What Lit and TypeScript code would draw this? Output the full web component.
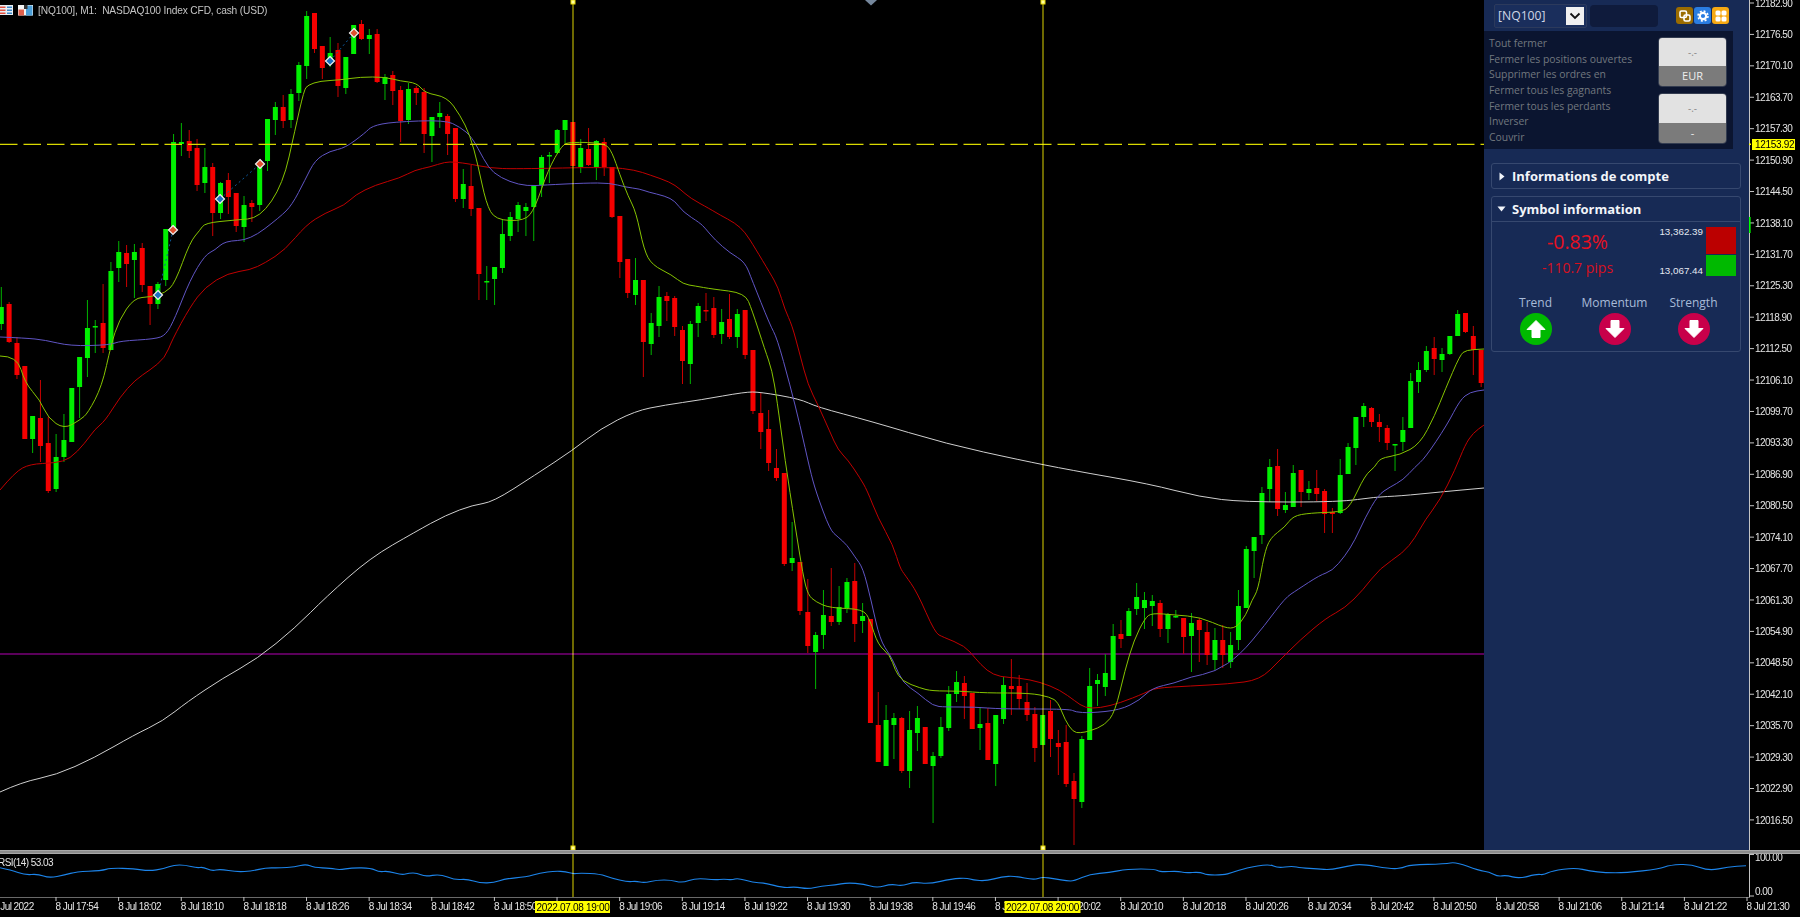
import { LitElement, html, svg, css } from 'lit';
import { customElement } from 'lit/decorators.js';

// [green?, high, body top, body bottom, low] in chart pixels, one bar per minute
const BARS: number[][] = [
  [1,287,307,324,330],[0,302,304,342,343],[0,337,343,375,379],[0,366,366,439,439],[1,416,416,439,453],
  [0,380,418,446,462],[0,417,443,491,493],[1,434,457,489,492],[1,414,440,457,462],[1,388,388,442,442],
  [1,357,357,387,418],[1,300,328,358,377],[1,320,326,327,353],[0,284,323,348,353],[1,262,271,350,350],
  [1,241,252,268,282],[0,245,253,264,287],[1,244,252,260,298],[0,243,248,285,292],[0,286,286,304,325],
  [1,282,284,304,309],[1,229,229,280,286],[1,134,142,228,228],[1,123,142,144,156],[0,130,141,151,158],
  [0,139,148,185,191],[1,148,167,183,193],[0,163,167,213,236],[1,182,183,213,219],[0,173,180,197,214],
  [0,193,193,226,232],[1,196,205,227,242],[0,200,203,207,222],[1,163,167,205,211],[1,119,119,161,171],
  [1,102,107,120,135],[0,95,107,121,128],[1,89,94,120,128],[1,62,65,93,101],[1,11,16,66,79],
  [0,13,13,49,53],[0,46,46,68,79],[1,37,53,63,67],[0,43,50,86,97],[1,57,57,88,94],
  [1,25,25,54,54],[0,20,24,39,40],[1,29,35,39,54],[0,29,34,82,83],[1,74,77,84,100],
  [0,71,75,91,105],[0,86,90,121,142],[1,83,89,120,124],[0,86,88,93,105],[0,88,92,134,153],
  [1,117,117,136,162],[1,102,113,117,128],[0,114,116,134,155],[0,128,128,199,202],[1,169,184,199,208],
  [0,165,186,209,216],[0,208,208,274,300],[1,266,281,282,300],[1,267,267,279,305],[1,220,234,268,273],
  [1,212,217,236,241],[1,202,205,219,232],[1,203,207,211,236],[1,186,186,207,241],[1,155,157,185,197],
  [1,152,155,156,183],[1,129,130,153,154],[1,120,120,130,143],[0,122,122,166,166],[1,139,148,167,173],
  [0,128,149,165,166],[1,140,141,167,180],[0,138,142,167,176],[0,167,167,217,218],[0,216,216,262,278],
  [0,259,259,293,298],[1,258,280,295,305],[0,280,280,342,377],[1,313,323,344,355],[1,286,297,326,337],
  [0,292,296,301,321],[0,296,298,327,336],[0,326,330,361,384],[1,321,324,364,384],[1,303,306,323,337],
  [0,293,310,311,321],[0,297,308,335,338],[1,309,322,334,344],[0,294,319,337,339],[1,309,314,337,348],
  [0,310,310,355,359],[0,350,350,411,414],[0,393,413,432,449],[0,410,429,463,471],[0,449,468,478,481],
  [0,473,473,564,566],[1,522,558,563,571],[0,562,562,611,615],[0,579,612,646,653],[1,632,635,652,689],
  [1,590,615,635,649],[0,568,616,622,626],[1,586,607,622,625],[1,578,582,608,613],[0,563,581,624,642],
  [1,603,616,621,633],[0,619,619,723,723],[0,692,725,762,762],[1,705,720,766,766],[1,713,718,725,759],
  [0,717,718,771,773],[1,711,730,771,788],[1,706,718,733,751],[0,727,727,764,764],[1,752,756,766,823],
  [1,717,727,756,758],[1,686,694,728,731],[1,671,682,694,702],[0,676,683,696,719],[0,693,693,729,729],
  [1,707,724,728,750],[0,708,723,760,760],[1,715,715,764,786],[1,677,685,719,724],[0,659,686,689,715],
  [0,675,686,699,709],[0,683,702,715,721],[0,707,714,748,762],[1,715,715,745,745],[0,700,711,739,757],
  [0,730,743,747,775],[0,725,742,784,787],[0,773,781,799,845],[1,736,739,802,808],[1,668,686,740,740],
  [1,674,680,684,706],[1,654,673,687,696],[1,624,636,680,680],[0,620,634,639,648],[1,608,611,636,636],
  [1,583,597,609,615],[1,592,600,608,629],[1,595,601,606,626],[0,600,603,629,637],[1,613,614,629,643],
  [1,610,616,617,618],[0,618,618,637,654],[1,613,623,636,672],[0,618,620,630,662],[0,622,632,655,665],
  [1,628,640,660,670],[0,625,640,655,668],[1,632,645,662,668],[1,590,606,640,650],[1,546,549,608,608],
  [1,537,537,551,578],[1,487,493,535,544],[1,459,467,489,502],[0,449,466,509,516],[1,492,505,510,513],
  [1,465,473,507,507],[0,470,470,492,507],[1,481,489,493,500],[0,470,488,494,501],[0,489,491,514,533],
  [0,508,512,514,533],[1,459,475,513,514],[1,443,447,474,474],[1,417,417,448,465],[1,403,406,417,427],
  [0,407,408,422,427],[0,414,422,427,442],[0,425,428,443,450],[1,444,444,445,471],[1,417,430,442,451],
  [1,373,381,428,428],[1,362,370,382,393],[1,346,351,370,372],[0,337,348,359,375],[1,348,354,360,372],
  [1,336,336,354,355],[1,310,314,336,336],[0,313,313,332,333],[0,326,336,350,375],[0,350,350,383,387],
];

const FAST = '0,356 17,356 25,383 40,400 48,418 64,429 80,420 88,413 102,386 111,345 119,320 134,298 150,297 165,293 175,283 190,242 200,230 205,223 235,220 260,218 283,184 295,130 304,90 308,85 320,81 340,80 360,77 385,77 400,81 417,83 425,93 447,97 460,115 470,135 478,165 486,203 495,220 525,221 535,208 548,170 562,145 570,142 605,143 612,152 620,175 628,196 636,212 644,250 652,265 672,275 683,284 695,286 712,289 745,293 752,310 765,350 772,370 777,400 785,460 795,525 803,575 808,595 816,602 830,608 863,609 870,620 878,645 890,655 895,670 902,681 920,688 932,691 960,691 985,693 1030,693 1050,697 1058,702 1065,720 1073,732 1080,733 1090,731 1105,725 1115,712 1125,670 1134,640 1145,618 1152,613 1175,615 1200,617 1225,628 1236,628 1246,615 1252,600 1258,590 1264,555 1270,538 1285,527 1293,516 1310,513 1340,512 1350,507 1365,475 1375,467 1380,458 1400,455 1420,444 1435,415 1445,390 1460,355 1466,350 1484,349';
const MID = '0,337 25,338 45,340 70,346 110,345 120,341 155,339 166,335 175,318 190,280 205,255 215,250 225,241 250,240 280,217 292,205 305,180 315,160 330,151 345,148 365,133 372,126 392,122 445,120 460,127 472,137 484,160 493,173 510,182 527,186 545,185 585,183 610,183 625,187 640,189 648,192 665,196 675,201 683,212 700,223 705,228 715,240 730,253 745,262 752,280 770,325 777,338 790,385 800,425 810,470 816,492 830,530 838,537 847,545 855,557 863,568 871,600 880,640 890,655 895,665 903,683 918,693 933,706 945,707 975,707 1000,709 1070,709 1075,712 1090,713 1120,710 1140,700 1152,688 1175,683 1190,677 1215,672 1240,655 1265,625 1285,598 1297,590 1320,575 1332,571 1345,556 1355,540 1365,518 1378,495 1390,487 1403,480 1415,467 1425,458 1447,425 1460,400 1470,392 1484,390';
const SLOW = '0,490 15,472 30,464 55,463 70,459 85,443 95,429 105,421 120,397 135,380 150,370 165,358 172,340 190,307 205,287 228,273 250,270 265,263 285,250 306,225 325,213 345,205 355,195 375,185 400,178 415,170 430,167 445,162 455,162 470,164 490,168 515,169 610,167 635,170 650,175 670,182 680,189 690,198 710,209 720,215 735,223 745,232 755,248 770,273 778,287 785,310 792,325 800,355 808,385 818,405 830,432 838,450 848,460 860,478 867,490 878,518 893,545 900,568 905,575 917,592 935,633 943,637 965,646 975,658 987,671 1000,677 1020,678 1040,682 1060,690 1075,701 1085,708 1100,708 1120,703 1145,693 1155,688 1190,686 1228,684 1260,680 1280,660 1300,640 1326,618 1345,608 1363,590 1380,568 1403,553 1415,538 1425,520 1440,500 1455,470 1465,445 1473,433 1484,425';
const LONG = '0,792 22,782 56,775 94,758 134,735 163,721 187,702 223,678 257,659 295,628 326,597 370,558 415,532 446,515 473,505 493,502 535,475 573,450 600,429 635,411 665,405 700,400 745,392 760,392 800,399 817,407 870,421 947,444 1020,460 1070,470 1150,484 1200,497 1243,502 1340,502 1375,497 1400,496 1440,492 1484,488';
const RSI = '0,13.7 11,16 25,21 38,20 49,24 65,21 76,17.7 101,16.7 111,14 134,14.7 149,17 164,14.7 174,11 185,11 197,14 203,13 212,17 220,15 237,18 252,17 266,13.7 279,14 295,13 306,10 314,13.7 331,14 339,16 352,13.7 371,14 379,18 388,17 402,21 409,19 417,19 425,22.7 440,20 455,26 467,25 480,29 494,28.7 505,24.7 526,23 540,19 555,17 566,17.7 573,20 580,19 600,20 611,24 628,28 636,27 644,29 657,26 671,26 682,29 696,24 715,26 724,25 732,26 738,24 753,28.7 764,28.7 784,34 795,32.7 808,35 822,32 835,31 847,28.7 864,30 877,34 891,30 902,32 914,28 929,30 952,24.7 967,24 973,26 986,27 1002,22.7 1015,22 1034,26 1042,23 1055,24.7 1067,27 1074,27 1090,20 1109,18.7 1127,15 1155,15 1160,18 1178,17 1185,19 1200,18 1207,21 1223,21 1232,18.7 1246,14 1269,10 1278,14 1292,12 1301,14 1318,14.7 1330,16 1349,11.7 1362,10 1391,15 1403,14 1410,10.7 1445,10 1456,8 1479,16.7 1489,17.7 1498,22.7 1506,21 1519,24.7 1537,20 1544,21 1552,16.7 1575,13.7 1590,17 1605,18.7 1626,18.7 1659,15 1670,11 1691,10 1709,17 1728,12.7 1746,11.7';

const PRICES = ['12182.90','12176.50','12170.10','12163.70','12157.30','12150.90','12144.50','12138.10','12131.70','12125.30','12118.90','12112.50','12106.10','12099.70','12093.30','12086.90','12080.50','12074.10','12067.70','12061.30','12054.90','12048.50','12042.10','12035.70','12029.30','12022.90','12016.50'];

const CLOSE_ACTIONS = ['Tout fermer', 'Fermer les positions ouvertes', 'Supprimer les ordres en', 'Fermer tous les gagnants', 'Fermer tous les perdants', 'Inverser', 'Couvrir'];

const TREND_ITEMS = [
  { label: 'Trend', up: true },
  { label: 'Momentum', up: false },
  { label: 'Strength', up: false },
];

const timeLabel = (k: number) => {
  const m = 17 * 60 + 54 + k * 8;
  return `8 Jul ${Math.floor(m / 60)}:${String(m % 60).padStart(2, '0')}`;
};

// rounds the sampled line through the midpoints of its segments
const smooth = (points: string) => {
  const p = points.split(' ').map((s) => s.split(',').map(Number));
  let d = `M${p[0][0]} ${p[0][1]}`;
  for (let i = 1; i < p.length - 1; i++) {
    d += ` Q${p[i][0]} ${p[i][1]} ${(p[i][0] + p[i + 1][0]) / 2} ${(p[i][1] + p[i + 1][1]) / 2}`;
  }
  const last = p[p.length - 1];
  return `${d} L${last[0]} ${last[1]}`;
};

const LINE_A = 573;
const LINE_B = 1043;

@customElement('app-root')
export class AppRoot extends LitElement {
  static styles = css`
    :host {
      display: block;
      width: 1800px;
      height: 917px;
      background: #000;
      overflow: hidden;
      font-family: "Open Sans", sans-serif;
    }
    svg { display: block; }
    .top { display: flex; height: 850px; }
    .sep { height: 4px; background: #8c8c8c; border-top: 1px solid #a8a8a8; border-bottom: 1px solid #a8a8a8; box-sizing: border-box; }

    .axis-text { font: 10px "Liberation Sans", sans-serif; letter-spacing: -0.55px; fill: #e4e4e4; }
    .title { font: 10.2px "Liberation Sans", sans-serif; letter-spacing: -0.15px; fill: #c4c4c4; white-space: pre; }
    .axis-line { stroke: #c4c4c4; stroke-width: 1; fill: none; }
    .time-line { stroke: #8d8d8d; stroke-width: 1.4; }
    .tag { fill: #ffff00; }
    .tag-text { font: 10px "Liberation Sans", sans-serif; letter-spacing: -0.3px; fill: #000; }
    .vline { stroke: #8a8400; stroke-width: 1.6; mix-blend-mode: screen; }
    .wick-g { stroke: #00b400; stroke-width: 1; }
    .wick-r { stroke: #c80000; stroke-width: 1; }
    .body-g { fill: #00f000; }
    .body-r { fill: #f50000; }
    .ma { fill: none; stroke-width: 1; stroke-linejoin: round; }
    .ma-fast { stroke: #86c400; }
    .ma-mid { stroke: #6055c4; }
    .ma-slow { stroke: #c00000; }
    .ma-long { stroke: #cfcfcf; }
    .rsi { fill: none; stroke: #1c84ea; stroke-width: 1.1; }
    .dash { stroke: #d9d900; stroke-width: 1.2; stroke-dasharray: 17.5 6; }
    .magenta { stroke: #b400b4; stroke-width: 1.2; }
    .trade { stroke: #0d5a9c; stroke-width: 1; stroke-dasharray: 2 3; }
    .handle { fill: #ffffa0; stroke: #e8d800; stroke-width: 1; }
    .mark { stroke: #f0f0f0; stroke-width: 1.2; }
    .mark-buy { fill: #1b6fc0; }
    .mark-sell { fill: #e0502f; }

    .panel {
      width: 265px;
      height: 849.5px;
      background: #172a55;
      color: #fff;
    }
    .toolbar { display: flex; align-items: center; height: 31px; padding-left: 10px; box-sizing: border-box; }
    .select {
      display: flex;
      align-items: center;
      justify-content: space-between;
      box-sizing: border-box;
      width: 93px;
      height: 24px;
      padding: 0 2px 0 3px;
      border: 1px solid #2c3a5c;
      border-radius: 2px;
      background: #1a2e5c;
      font-size: 12.2px;
      color: #cfd6e6;
    }
    .caret { display: flex; align-items: center; justify-content: center; width: 18px; height: 18px; background: #f0f0f0; }
    .search { width: 68px; height: 22px; margin-left: 3px; border-radius: 4px; background: #0f1b3c; }
    .tools { display: flex; gap: 1px; margin-left: 18px; }
    .tool { width: 17px; height: 17px; border-radius: 3px; display: flex; align-items: center; justify-content: center; }
    .tool-gold { background: #9b6c00; }
    .tool-blue { background: #2a7de1; }
    .tool-orange { background: #f6a913; }

    .close-box {
      display: flex;
      justify-content: space-between;
      box-sizing: border-box;
      width: 249px;
      height: 118px;
      padding: 5px 6px 0 5px;
      background: #0b1530;
    }
    .close-list { display: flex; flex-direction: column; font-size: 10.4px; line-height: 15.67px; color: #72787f; white-space: nowrap; }
    .money-col { display: flex; flex-direction: column; gap: 6px; padding-top: 0.5px; }
    .money { width: 69px; height: 50px; border-radius: 4px; overflow: hidden; display: flex; flex-direction: column; border: 1px solid #333c50; box-sizing: border-box; font-size: 11px; text-align: center; }
    .money + .money { height: 51px; }
    .money-top { flex: 1; background: #e2e2e2; color: #8a8a8a; font-size: 10px; display: flex; align-items: center; justify-content: center; }
    .money-bot { height: 20px; background: #7b7b7b; color: #eee; display: flex; align-items: center; justify-content: center; }

    .acc { margin-left: 7px; width: 250px; box-sizing: border-box; border: 1px solid #36486f; border-radius: 3px; }
    .acc-closed { margin-top: 14px; height: 26px; }
    .acc-open { margin-top: 7px; height: 156px; }
    .acc-head { display: flex; align-items: center; height: 24px; font-size: 13px; font-weight: 700; color: #f2f5fa; white-space: nowrap; }
    .acc-open .acc-head { border-bottom: 1px solid #36486f; }
    .tri { width: 20px; display: flex; justify-content: center; }
    .acc-open .tri { padding-right: 1px; box-sizing: border-box; }

    .quote { display: flex; height: 62px; padding-top: 5px; box-sizing: border-box; }
    .change { width: 160px; display: flex; flex-direction: column; align-items: center; color: #e8101f; padding-left: 11px; box-sizing: border-box; }
    .pct { font-size: 19.5px; line-height: 27px; margin-top: 1px; }
    .pips { font-size: 14px; line-height: 20px; margin-top: 3px; color: #d81020; }
    .range { display: flex; flex: 1; }
    .range-vals { width: 54px; display: flex; flex-direction: column; justify-content: space-between; align-items: flex-end; font: 9.8px "Liberation Sans", sans-serif; color: #e4e8f0; height: 50px; margin: -1px 3px 0 -3px; }
    .range-bars { width: 30px; display: flex; flex-direction: column; gap: 1px; }
    .bar-hi { height: 27px; background: #bb0000; }
    .bar-lo { height: 21px; background: #00b900; }

    .trends { display: flex; padding: 10px 0 0 4px; }
    .trend { width: 79px; display: flex; flex-direction: column; align-items: center; font-size: 12px; line-height: 17px; color: #a8bbd8; white-space: nowrap; gap: 2px; }
    .dot { width: 32px; height: 32px; border-radius: 50%; display: flex; align-items: center; justify-content: center; }
    .dot-up { background: #00b900; }
    .dot-down { background: #c8004a; }
  `;

  private bars() {
    return BARS.map(([g, hi, top, bot, lo], i) => {
      const x = 1.3 + 7.83 * i;
      return svg`
        <line class=${g ? 'wick-g' : 'wick-r'} x1=${x} x2=${x} y1=${hi} y2=${lo}></line>
        <rect class=${g ? 'body-g' : 'body-r'} x=${x - 2.5} y=${top} width="5" height=${Math.max(bot - top, 1.5)}></rect>`;
    });
  }

  private marker(x: number, y: number, buy: boolean) {
    const p = `${x},${y - 4.5} ${x + 4.5},${y} ${x},${y + 4.5} ${x - 4.5},${y}`;
    return svg`<polygon class="mark ${buy ? 'mark-buy' : 'mark-sell'}" points=${p}></polygon>`;
  }

  private chart() {
    return html`<svg width="1484" height="850" viewBox="0 0 1484 850">
      <line class="magenta" x1="0" x2="1484" y1="654" y2="654"></line>
      ${this.bars()}
      <path class="ma ma-long" d=${smooth(LONG)}></path>
      <path class="ma ma-slow" d=${smooth(SLOW)}></path>
      <path class="ma ma-mid" d=${smooth(MID)}></path>
      <path class="ma ma-fast" d=${smooth(FAST)}></path>
      <line class="dash" x1="0" x2="1484" y1="144.3" y2="144.3"></line>
      <line class="trade" x1="158" y1="295" x2="173" y2="230"></line>
      <line class="trade" x1="220" y1="199" x2="260" y2="164"></line>
      <line class="trade" x1="330" y1="61" x2="354" y2="33"></line>
      ${this.marker(158, 295, true)}${this.marker(173, 230, false)}
      ${this.marker(220, 199, true)}${this.marker(260, 164, false)}
      ${this.marker(330, 61, true)}${this.marker(354, 33, false)}
      <polygon points="865,0 877,0 871,5.5" fill="#75879c"></polygon>
      <line class="vline" x1=${LINE_A} x2=${LINE_A} y1="0" y2="850"></line>
      <line class="vline" x1=${LINE_B} x2=${LINE_B} y1="0" y2="850"></line>
      <rect class="handle" x=${LINE_A - 2} y="0" width="4" height="4"></rect>
      <rect class="handle" x=${LINE_B - 2} y="0" width="4" height="4"></rect>
      <rect class="handle" x=${LINE_A - 2} y="846" width="4" height="4"></rect>
      <rect class="handle" x=${LINE_B - 2} y="846" width="4" height="4"></rect>
      <g>
        <rect x="0" y="5" width="13" height="10" fill="#e8eef4"></rect>
        <rect x="0" y="6.5" width="5.5" height="1.5" fill="#e05040"></rect>
        <rect x="0" y="9.5" width="5.5" height="1.5" fill="#e05040"></rect>
        <rect x="0" y="12.5" width="5.5" height="1.5" fill="#e05040"></rect>
        <rect x="7" y="6.5" width="5" height="1.5" fill="#3a88c8"></rect>
        <rect x="7" y="9.5" width="5" height="1.5" fill="#3a88c8"></rect>
        <rect x="7" y="12.5" width="5" height="1.5" fill="#3a88c8"></rect>
        <rect x="18" y="5" width="15" height="10.5" fill="#f4f4f4"></rect>
        <rect x="18.5" y="9.5" width="5.5" height="6" fill="#e0604c"></rect>
        <rect x="26" y="5.5" width="6.5" height="10" fill="#4a9ed8"></rect>
        <rect x="24" y="5" width="3.5" height="4" fill="#333"></rect>
      </g>
      <text class="title" x="38" y="13.7">[NQ100], M1:  NASDAQ100 Index CFD, cash (USD)</text>
    </svg>`;
  }

  private priceAxis() {
    return html`<svg width="51" height="850" viewBox="1749 0 51 850">
      <line class="axis-line" x1="1749.5" x2="1749.5" y1="0" y2="850"></line>
      ${PRICES.map((p, i) => {
        const y = 3 + i * 31.42;
        return svg`
          <line class="axis-line" x1="1749" x2="1754" y1=${y} y2=${y}></line>
          <text class="axis-text" x="1755" y=${y + 3.6}>${p}</text>`;
      })}
      <rect x="1749" y="217" width="1.6" height="16" fill="#00ff00"></rect>
      <rect class="tag" x="1749" y="143.5" width="2" height="1.5"></rect>
      <rect class="tag" x="1752" y="139" width="43" height="11"></rect>
      <text class="tag-text" x="1755" y="148.2">12153.92</text>
    </svg>`;
  }

  private rsiRow() {
    return html`<svg width="1800" height="43" viewBox="0 0 1800 43">
      <path class="rsi" fill="none" d=${smooth(RSI)}></path>
      <line class="vline" x1=${LINE_A} x2=${LINE_A} y1="0" y2="43"></line>
      <line class="vline" x1=${LINE_B} x2=${LINE_B} y1="0" y2="43"></line>
      <line class="axis-line" x1="1749.5" x2="1749.5" y1="0" y2="43"></line>
      <line class="axis-line" x1="1749" x2="1754" y1="0.5" y2="0.5"></line>
      <line class="axis-line" x1="1749" x2="1754" y1="42" y2="42"></line>
      <text class="axis-text" x="-2" y="11.5">RSI(14) 53.03</text>
      <text class="axis-text" x="1755" y="6.5">100.00</text>
      <text class="axis-text" x="1755" y="40.5">0.00</text>
    </svg>`;
  }

  private timeAxis() {
    const ticks = Array.from({ length: 28 }, (_, k) => 56 + k * 62.63);
    return html`<svg width="1800" height="20" viewBox="0 0 1800 20">
      <line class="time-line" x1="0" x2="1750" y1="0" y2="0"></line>
      <text class="axis-text" x="-7" y="13">8 Jul 2022</text>
      ${ticks.map((x, k) => svg`
        <line class="axis-line" x1=${x} x2=${x} y1="0" y2="4"></line>
        <text class="axis-text" x=${x - 0.5} y="13">${timeLabel(k)}</text>`)}
      <rect class="tag" x="535" y="4" width="75" height="12"></rect>
      <text class="tag-text" x="536.5" y="13.5">2022.07.08 19:00</text>
      <rect class="tag" x="1004.5" y="4" width="76" height="12"></rect>
      <text class="tag-text" x="1006" y="13.5">2022.07.08 20:00</text>
    </svg>`;
  }

  private arrow(up: boolean) {
    const d = 'M0 -8.5 L9 0.5 L4 0.5 L4 8.5 L-4 8.5 L-4 0.5 L-9 0.5 Z';
    return html`<svg width="22" height="22" viewBox="-11 -11 22 22">
      <path d=${d} fill="#fff" stroke="#fff" stroke-width="1" stroke-linejoin="round" transform=${up ? '' : 'rotate(180)'}></path>
    </svg>`;
  }

  private panel() {
    return html`<aside class="panel">
      <div class="toolbar">
        <div class="select">
          <span>[NQ100]</span>
          <span class="caret"><svg width="12" height="8" viewBox="0 0 12 8"><path d="M1.5 1.5 L6 6 L10.5 1.5" fill="none" stroke="#111" stroke-width="1.8"></path></svg></span>
        </div>
        <div class="search"></div>
        <div class="tools">
          <span class="tool tool-gold"><svg width="12" height="12" viewBox="0 0 12 12"><rect x="1" y="1" width="6.5" height="6.5" rx="1.5" fill="none" stroke="#fff" stroke-width="1.6"></rect><rect x="5" y="5" width="6" height="6" rx="1.5" fill="none" stroke="#fff" stroke-width="1.6"></rect></svg></span>
          <span class="tool tool-blue"><svg width="12" height="12" viewBox="0 0 12 12"><circle cx="6" cy="6" r="3.2" fill="none" stroke="#fff" stroke-width="2.2"></circle><circle cx="6" cy="6" r="5" fill="none" stroke="#fff" stroke-width="1.5" stroke-dasharray="2 1.93"></circle></svg></span>
          <span class="tool tool-orange"><svg width="12" height="12" viewBox="0 0 12 12"><rect x="0.5" y="0.5" width="5" height="5" rx="1.5" fill="#fff"></rect><rect x="6.5" y="0.5" width="5" height="5" rx="1.5" fill="#fff"></rect><rect x="0.5" y="6.5" width="5" height="5" rx="1.5" fill="#fff"></rect><rect x="6.5" y="6.5" width="5" height="5" rx="1.5" fill="#fff"></rect></svg></span>
        </div>
      </div>
      <div class="close-box">
        <div class="close-list">${CLOSE_ACTIONS.map((a) => html`<span>${a}</span>`)}</div>
        <div class="money-col">
          <div class="money"><div class="money-top">-.-</div><div class="money-bot">EUR</div></div>
          <div class="money"><div class="money-top">-.-</div><div class="money-bot">-</div></div>
        </div>
      </div>
      <section class="acc acc-closed">
        <div class="acc-head">
          <span class="tri"><svg width="6" height="9" viewBox="0 0 6 9"><path d="M0.5 0.5 L5.5 4.5 L0.5 8.5 Z" fill="#f2f5fa"></path></svg></span>
          Informations de compte
        </div>
      </section>
      <section class="acc acc-open">
        <div class="acc-head">
          <span class="tri"><svg width="9" height="6" viewBox="0 0 9 6"><path d="M0.5 0.5 L8.5 0.5 L4.5 5.5 Z" fill="#f2f5fa"></path></svg></span>
          Symbol information
        </div>
        <div class="quote">
          <div class="change">
            <span class="pct">-0.83%</span>
            <span class="pips">-110.7 pips</span>
          </div>
          <div class="range">
            <div class="range-vals"><span>13,362.39</span><span>13,067.44</span></div>
            <div class="range-bars"><div class="bar-hi"></div><div class="bar-lo"></div></div>
          </div>
        </div>
        <div class="trends">
          ${TREND_ITEMS.map((t) => html`<div class="trend">
            <span>${t.label}</span>
            <span class="dot ${t.up ? 'dot-up' : 'dot-down'}">${this.arrow(t.up)}</span>
          </div>`)}
        </div>
      </section>
    </aside>`;
  }

  render() {
    return html`
      <div class="top">${this.chart()}${this.panel()}${this.priceAxis()}</div>
      <div class="sep"></div>
      ${this.rsiRow()}
      ${this.timeAxis()}
    `;
  }
}
